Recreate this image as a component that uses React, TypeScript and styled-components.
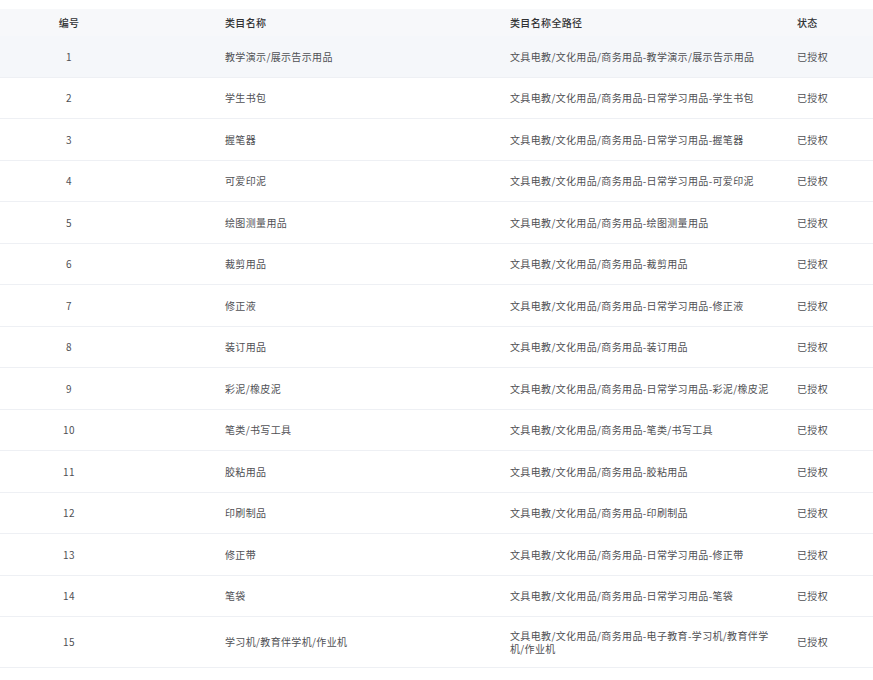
import React from "react";
import styled, { createGlobalStyle } from "styled-components";

const Global = createGlobalStyle`
  html, body { margin: 0; padding: 0; background: #ffffff; }
  body { font-family: "Noto Sans CJK SC", "Noto Sans", sans-serif; }
`;

const Page = styled.div`
  padding-top: 9px;
  width: 873px;
`;

const Table = styled.div`
  display: flex;
  flex-direction: column;
  font-size: 10px;
  letter-spacing: 0.35px;
`;

const Row = styled.div<{ $head?: boolean; $hover?: boolean }>`
  display: grid;
  grid-template-columns: 138px 360px 287px 1fr;
  align-items: center;
  box-sizing: border-box;
  min-height: ${(p) => (p.$head ? "27px" : "41.5px")};
  background: ${(p) => (p.$head ? "#f7f8fa" : p.$hover ? "#f5f7fa" : "#ffffff")};
  border-bottom: ${(p) => (p.$head ? "none" : "1px solid #eef0f4")};
  color: ${(p) => (p.$head ? "#303133" : "#4f5054")};
  font-weight: ${(p) => (p.$head ? 500 : 400)};
`;

const Cell = styled.div<{ $align?: "center" | "left"; $indent?: number }>`
  box-sizing: border-box;
  padding: 6px 12px 6px ${(p) => (p.$indent ?? 12)}px;
  text-align: ${(p) => p.$align ?? "left"};
  line-height: 13.5px;
  word-break: break-all;
`;

const WideCell = styled(Cell)`
  padding-top: 11.5px;
  padding-bottom: 11.5px;
`;

const base = "文具电教/文化用品/商务用品-";
const rows: [string, string][] = [
  ["教学演示/展示告示用品", base + "教学演示/展示告示用品"],
  ["学生书包", base + "日常学习用品-学生书包"],
  ["握笔器", base + "日常学习用品-握笔器"],
  ["可爱印泥", base + "日常学习用品-可爱印泥"],
  ["绘图测量用品", base + "绘图测量用品"],
  ["裁剪用品", base + "裁剪用品"],
  ["修正液", base + "日常学习用品-修正液"],
  ["装订用品", base + "装订用品"],
  ["彩泥/橡皮泥", base + "日常学习用品-彩泥/橡皮泥"],
  ["笔类/书写工具", base + "笔类/书写工具"],
  ["胶粘用品", base + "胶粘用品"],
  ["印刷制品", base + "印刷制品"],
  ["修正带", base + "日常学习用品-修正带"],
  ["笔袋", base + "日常学习用品-笔袋"],
  ["学习机/教育伴学机/作业机", base + "电子教育-学习机/教育伴学机/作业机"],
];

export default function App() {
  return (
    <Page>
      <Global />
      <Table>
        <Row $head>
          <Cell $align="center">编号</Cell>
          <Cell $indent={87}>类目名称</Cell>
          <Cell>类目名称全路径</Cell>
          <Cell>状态</Cell>
        </Row>
        {rows.map(([name, path], i) => {
          const C = path.length > 30 ? WideCell : Cell;
          return (
            <Row key={i} $hover={i === 0}>
              <C $align="center">{i + 1}</C>
              <C $indent={87}>{name}</C>
              <C>{path}</C>
              <C>已授权</C>
            </Row>
          );
        })}
      </Table>
    </Page>
  );
}
